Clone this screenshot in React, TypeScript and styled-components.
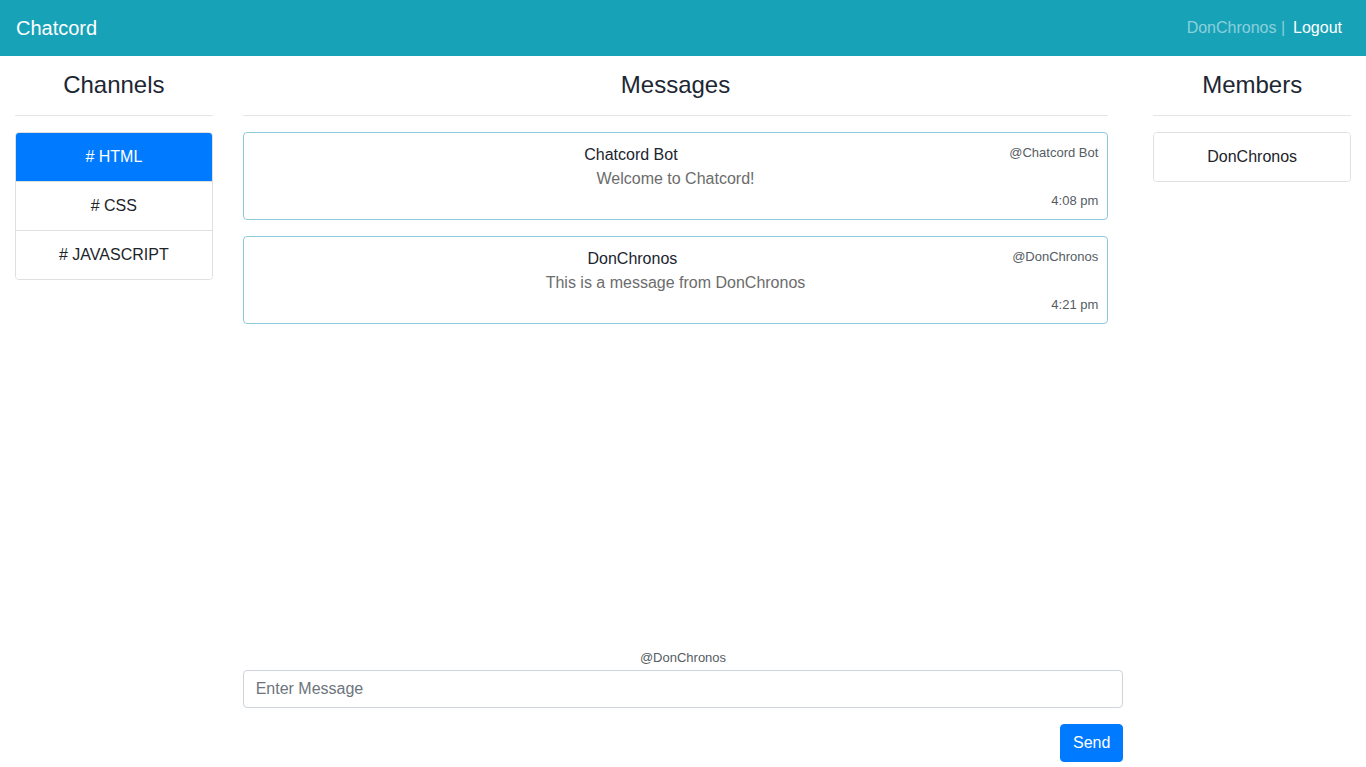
import React from "react";
import styled, { createGlobalStyle } from "styled-components";

const GlobalStyle = createGlobalStyle`
  * { box-sizing: border-box; }
  html, body { margin: 0; padding: 0; height: 100%; overflow: hidden; }
  body {
    font-family: "Liberation Sans", Arial, sans-serif;
    font-size: 16px;
    line-height: 1.5;
    color: #212529;
    background: #fff;
  }
`;

const Navbar = styled.nav`
  height: 56px;
  background: #17a2b8;
  display: flex;
  align-items: center;
  justify-content: space-between;
  padding: 0 16px;
`;

const Brand = styled.a`
  color: #fff;
  font-size: 20px;
  line-height: 30px;
  text-decoration: none;
`;

const NavRight = styled.div`
  display: flex;
  align-items: center;
  padding-right: 8px;
  gap: 8px;
`;

const NavItem = styled.span<{ $muted?: boolean }>`
  color: ${(p) => (p.$muted ? "rgba(255,255,255,0.5)" : "#fff")};
  font-size: 16px;
  line-height: 24px;
`;

const Main = styled.div`
  height: calc(100vh - 56px);
  display: grid;
  grid-template-columns: 1fr 4fr 1fr;
`;

const Column = styled.section`
  padding: 15px 15px 5px;
  display: flex;
  flex-direction: column;
  min-height: 0;
`;

const Heading = styled.h4`
  margin: 0;
  font-size: 24px;
  font-weight: 400;
  line-height: 1.2;
  text-align: center;
  color: #1d2733;
`;

const Divider = styled.hr<{ $flush?: boolean }>`
  margin: 15px 0 ${(p) => (p.$flush ? "0" : "16px")};
  border: 0;
  border-top: 1px solid rgba(0, 0, 0, 0.1);
`;

const ListGroup = styled.div`
  display: flex;
  flex-direction: column;
  border: 1px solid rgba(0, 0, 0, 0.125);
  border-radius: 4px;
  overflow: hidden;
`;

const ListItem = styled.div<{ $active?: boolean }>`
  padding: 12px 20px;
  text-align: center;
  font-size: 16px;
  line-height: 24px;
  background: ${(p) => (p.$active ? "#007bff" : "#fff")};
  color: ${(p) => (p.$active ? "#fff" : "#212529")};
  & + & {
    border-top: 1px solid rgba(0, 0, 0, 0.125);
  }
`;

const MessageList = styled.div`
  flex: 1;
  display: flex;
  flex-direction: column;
  gap: 16px;
  padding-right: 15px;
  overflow: hidden;
`;

const Card = styled.div`
  border: 1px solid #8ccbdc;
  border-radius: 4px;
  padding: 10px 9px 8px;
  display: flex;
  flex-direction: column;
`;

const CardTop = styled.div`
  display: flex;
  align-items: flex-start;
`;

const Author = styled.div`
  flex: 1;
  text-align: center;
  font-size: 16px;
  line-height: 24px;
  color: #1b2530;
`;

const Handle = styled.div`
  font-size: 13px;
  line-height: 19.5px;
  color: #555c63;
`;

const Body = styled.div`
  text-align: center;
  font-size: 16px;
  line-height: 24px;
  color: #6c6c6c;
`;

const Time = styled.div`
  text-align: right;
  font-size: 13px;
  line-height: 20px;
  color: #555c63;
`;

const Composer = styled.form`
  display: flex;
  flex-direction: column;
  margin: 0;
`;

const ComposerLabel = styled.div`
  text-align: center;
  font-size: 13px;
  line-height: 20px;
  color: #555c63;
  margin-bottom: 2px;
`;

const Input = styled.input`
  height: 38px;
  width: 100%;
  padding: 6px 12px;
  font-family: inherit;
  font-size: 16px;
  line-height: 24px;
  color: #495057;
  border: 1px solid #ced4da;
  border-radius: 4px;
  outline: none;
  &::placeholder { color: #6c757d; opacity: 1; }
`;

const ButtonRow = styled.div`
  display: flex;
  justify-content: flex-end;
  margin-top: 16px;
`;

const SendButton = styled.button`
  height: 38px;
  padding: 6px 12px;
  font-family: inherit;
  font-size: 16px;
  line-height: 24px;
  color: #fff;
  background: #007bff;
  border: 1px solid #007bff;
  border-radius: 4px;
`;

const messages = [
  { author: "Chatcord Bot", text: "Welcome to Chatcord!", time: "4:08 pm" },
  { author: "DonChronos", text: "This is a message from DonChronos", time: "4:21 pm" },
];

export default function App() {
  return (
    <>
      <GlobalStyle />
      <Navbar>
        <Brand>Chatcord</Brand>
        <NavRight>
          <NavItem $muted>DonChronos |</NavItem>
          <NavItem>Logout</NavItem>
        </NavRight>
      </Navbar>
      <Main>
        <Column>
          <Heading>Channels</Heading>
          <Divider />
          <ListGroup>
            <ListItem $active># HTML</ListItem>
            <ListItem># CSS</ListItem>
            <ListItem># JAVASCRIPT</ListItem>
          </ListGroup>
        </Column>
        <Column>
          <MessageList>
            <div>
              <Heading>Messages</Heading>
              <Divider $flush />
            </div>
            {messages.map((m) => (
              <Card key={m.time}>
                <CardTop>
                  <Author>{m.author}</Author>
                  <Handle>@{m.author}</Handle>
                </CardTop>
                <Body>{m.text}</Body>
                <Time>{m.time}</Time>
              </Card>
            ))}
          </MessageList>
          <Composer onSubmit={(e) => e.preventDefault()}>
            <ComposerLabel>@DonChronos</ComposerLabel>
            <Input placeholder="Enter Message" />
            <ButtonRow>
              <SendButton type="submit">Send</SendButton>
            </ButtonRow>
          </Composer>
        </Column>
        <Column>
          <Heading>Members</Heading>
          <Divider />
          <ListGroup>
            <ListItem>DonChronos</ListItem>
          </ListGroup>
        </Column>
      </Main>
    </>
  );
}
